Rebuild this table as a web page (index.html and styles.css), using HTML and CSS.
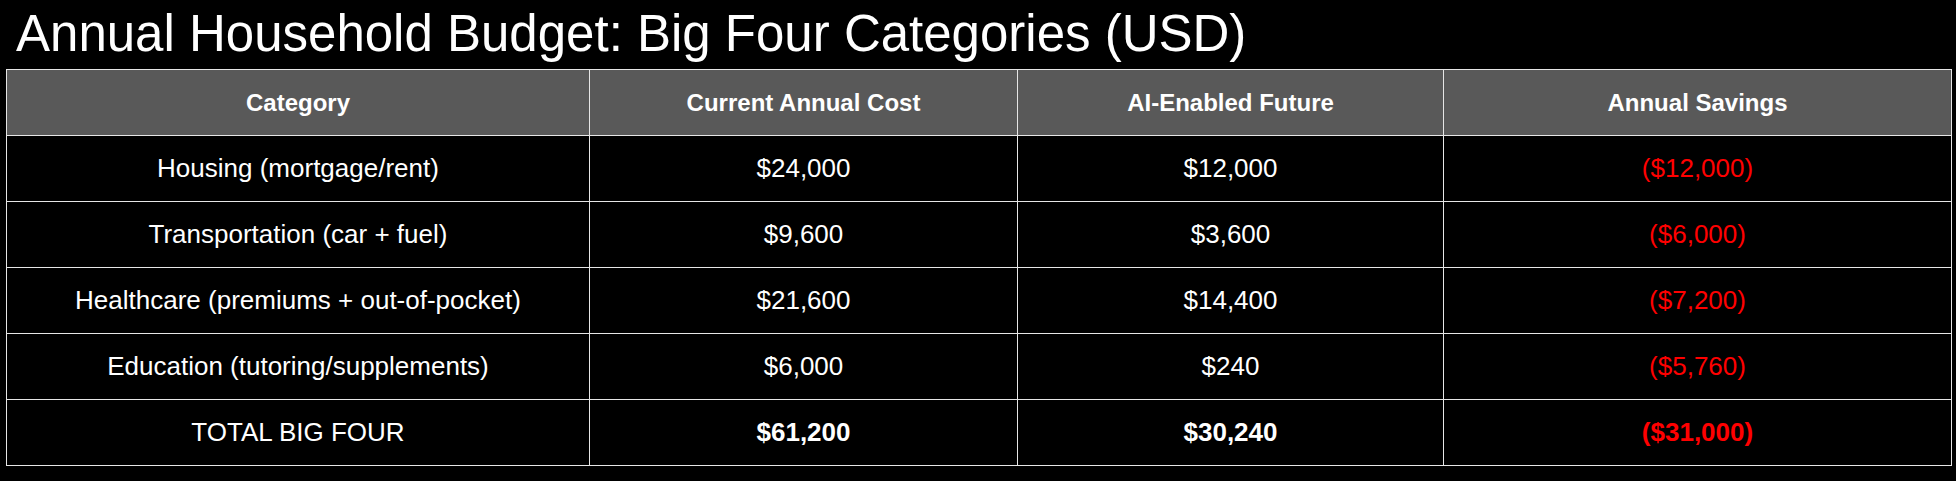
FILE: index.html
```html
<!DOCTYPE html>
<html lang="en">
<head>
<meta charset="utf-8">
<title>Annual Household Budget</title>
<link rel="stylesheet" href="styles.css">
</head>
<body>
<div class="page">
  <h1 class="title">Annual Household Budget: Big Four Categories (USD)</h1>
  <table class="budget">
    <colgroup>
      <col class="c1"><col class="c2"><col class="c3"><col class="c4">
    </colgroup>
    <thead>
      <tr>
        <th>Category</th>
        <th>Current Annual Cost</th>
        <th>AI-Enabled Future</th>
        <th>Annual Savings</th>
      </tr>
    </thead>
    <tbody>
      <tr><td>Housing (mortgage/rent)</td><td>$24,000</td><td>$12,000</td><td class="neg">($12,000)</td></tr>
      <tr><td>Transportation (car + fuel)</td><td>$9,600</td><td>$3,600</td><td class="neg">($6,000)</td></tr>
      <tr><td>Healthcare (premiums + out-of-pocket)</td><td>$21,600</td><td>$14,400</td><td class="neg">($7,200)</td></tr>
      <tr><td>Education (tutoring/supplements)</td><td>$6,000</td><td>$240</td><td class="neg">($5,760)</td></tr>
      <tr class="total"><td>TOTAL BIG FOUR</td><td class="b">$61,200</td><td class="b">$30,240</td><td class="neg b">($31,000)</td></tr>
    </tbody>
  </table>
</div>
</body>
</html>
```

FILE: styles.css
```css
html, body {
  margin: 0;
  padding: 0;
  background: #000;
}
.page {
  width: 1956px;
  height: 481px;
  padding: 4px 0 0 6px;
  box-sizing: border-box;
  font-family: "Liberation Sans", Arial, sans-serif;
  color: #fff;
}
.title {
  margin: 0 0 5px 10px;
  font-size: 51px;
  line-height: 60px;
  font-weight: normal;
  white-space: nowrap;
}
.budget {
  border-collapse: collapse;
  table-layout: fixed;
  width: 1945px;
  border: 1px solid #fff;
}
.c1 { width: 583px; }
.c2 { width: 428px; }
.c3 { width: 426px; }
.c4 { width: 508px; }
.budget th, .budget td {
  height: 66px;
  padding: 0;
  text-align: center;
  vertical-align: middle;
  border: 1px solid #e6e6e6;
  box-sizing: border-box;
}
.budget th {
  background: #595959;
  font-size: 24px;
  font-weight: bold;
}
.budget td {
  font-size: 26px;
}
.neg { color: #ff0000; }
.b { font-weight: bold; }
```
